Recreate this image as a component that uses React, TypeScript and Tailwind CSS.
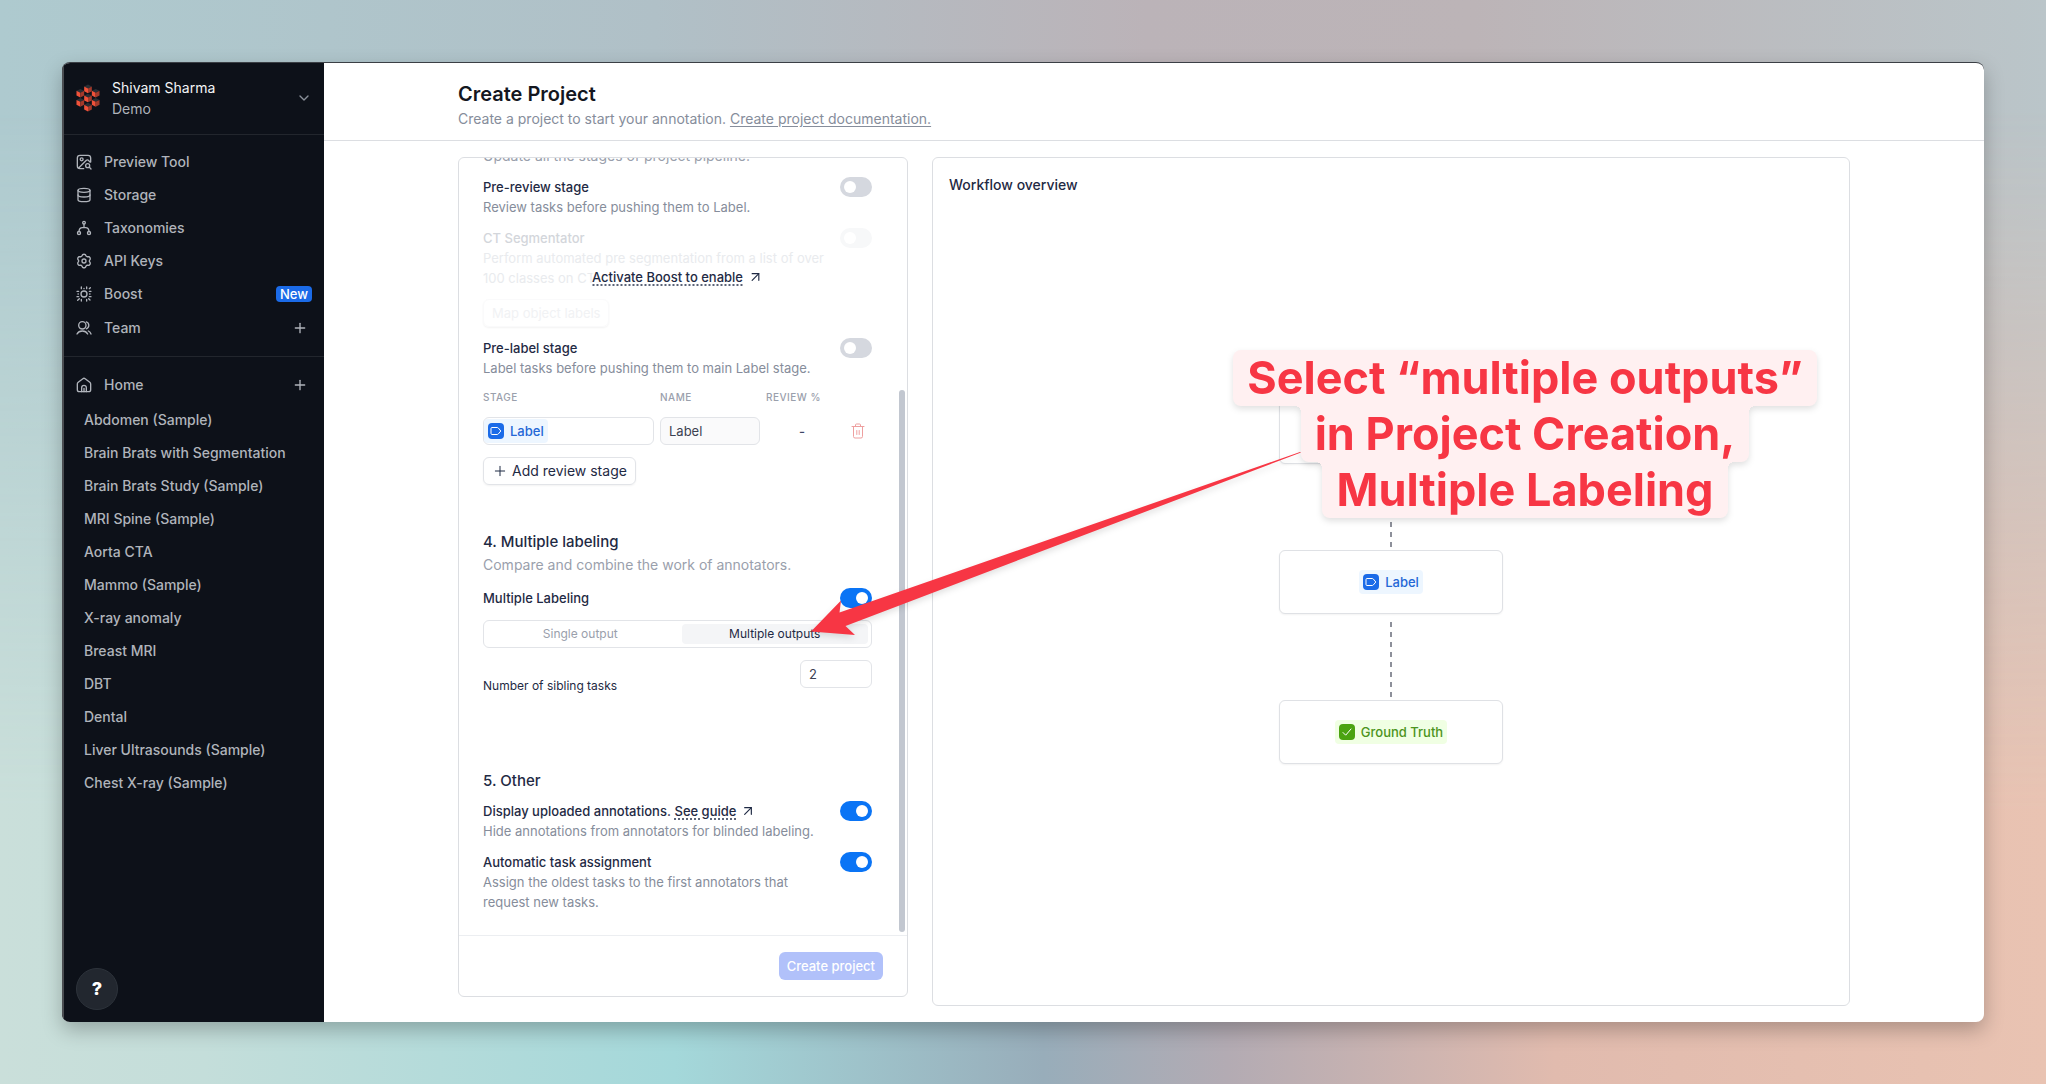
import { useState } from "react";
import { ArrowUpRight, ChevronDown, Database, Plus } from "lucide-react";

const projects = [
  "Abdomen (Sample)",
  "Brain Brats with Segmentation",
  "Brain Brats Study (Sample)",
  "MRI Spine (Sample)",
  "Aorta CTA",
  "Mammo (Sample)",
  "X-ray anomaly",
  "Breast MRI",
  "DBT",
  "Dental",
  "Liver Ultrasounds (Sample)",
  "Chest X-ray (Sample)",
];

function Icon({ children }: { children: React.ReactNode }) {
  return (
    <svg
      viewBox="0 0 24 24"
      className="size-4 shrink-0"
      fill="none"
      stroke="currentColor"
      strokeWidth="2"
      strokeLinecap="round"
      strokeLinejoin="round"
      aria-hidden="true"
    >
      {children}
    </svg>
  );
}

const PreviewIcon = () => (
  <Icon>
    <path d="M11.5 22H6a4 4 0 0 1-4-4V6a4 4 0 0 1 4-4h12a4 4 0 0 1 4 4v6" />
    <circle cx="8.5" cy="8" r="2.2" />
    <path d="M4 21 15.5 9.5c1-1 2-1 3 0L21 12" />
    <circle cx="17.5" cy="17.5" r="3" />
    <path d="m20 20 2.5 2.5" />
  </Icon>
);

const TaxonomyIcon = () => (
  <Icon>
    <circle cx="12" cy="4" r="2" />
    <circle cx="4.5" cy="19.5" r="2.3" />
    <circle cx="19.5" cy="19.5" r="2.3" />
    <path d="M12 6v5.500M4.500 17c.3-3.500 2-5.500 5-5.500h5c3 0 4.700 2 5 5.500" />
  </Icon>
);

const GearIcon = () => (
  <Icon>
    <path d="M10 2.500c1.300-.8 2.700-.8 4 0l1.300 2.300c.4.500 1 .8 1.600.8l2.600-.1c1.300.8 2 2 2 3.500L20.200 11.200c-.3.500-.3 1.100 0 1.600l1.300 2.200c0 1.500-.7 2.700-2 3.500l-2.600-.1c-.6 0-1.200.3-1.600.8L14 21.500c-1.300.8-2.700.8-4 0l-1.300-2.300c-.4-.5-1-.8-1.600-.8l-2.600.1c-1.300-.8-2-2-2-3.500l1.300-2.200c.3-.5.3-1.100 0-1.600L2.500 9c0-1.500.7-2.700 2-3.500l2.600.1c.6 0 1.200-.3 1.600-.8z" />
    <circle cx="12" cy="12" r="3" />
  </Icon>
);

const BoostIcon = () => (
  <Icon>
    <circle cx="12" cy="12" r="4.5" />
    <path d="M8 1.500V4M16 1.500V4M8 20v2.500M16 20v2.500M1.500 8H4M1.500 16H4M20 8h2.500M20 16h2.500M12 3.500v.5M20.500 12h.5M20 4l1.500-1.500M19 19l2 2M5 19l-2.500 2.500M3 12h.5" />
  </Icon>
);

const TeamIcon = () => (
  <Icon>
    <circle cx="9.5" cy="8" r="5.5" />
    <path d="M15.500 2.800a5.500 5.500 0 0 1 0 10.400" />
    <path d="M1.500 21c1.500-3 4.500-4.500 8-4.500s6.500 1.500 8 4.500M18.500 16.500c2 .8 3.300 2.300 4 4.500" />
  </Icon>
);

const HomeIcon = () => (
  <Icon>
    <path d="M2 10.500c0-1 .5-2 1.300-2.600l7-5.300a2.800 2.800 0 0 1 3.400 0l7 5.300c.8.600 1.300 1.600 1.300 2.600V19a3 3 0 0 1-3 3H5a3 3 0 0 1-3-3z" />
    <path d="M8.500 22v-6a3.500 3.500 0 0 1 7 0v6M12 17v5" />
  </Icon>
);

function Cube({ x, y }: { x: number; y: number }) {
  return (
    <g transform={`translate(${x} ${y})`}>
      <path d="M0 0 4-2 8 0 4 2z" fill="#2b2f35" />
      <path d="M0 0 4 2v5L0 5z" fill="#f0523a" />
      <path d="M8 0 4 2v5l4-2z" fill="#a33a2b" />
    </g>
  );
}

function Logo() {
  return (
    <svg viewBox="0 0 25 29" className="h-7 w-6 shrink-0" aria-hidden="true">
      <Cube x={8.5} y={2.5} />
      <Cube x={0.5} y={7} />
      <Cube x={16.5} y={7} />
      <Cube x={8.5} y={12} />
      <Cube x={0.5} y={16.5} />
      <Cube x={16.5} y={16.5} />
      <Cube x={8.5} y={21.5} />
    </svg>
  );
}

function NavItem({
  icon,
  label,
  children,
}: {
  icon: React.ReactNode;
  label: string;
  children?: React.ReactNode;
}) {
  return (
    <li className="flex h-[33px] items-center justify-between pr-3">
      <a href="#" className="flex items-center gap-3">
        {icon}
        {label}
      </a>
      {children}
    </li>
  );
}

function AddButton({ label }: { label: string }) {
  return (
    <button type="button" aria-label={label} className="p-1">
      <Plus className="size-4" strokeWidth={2} />
    </button>
  );
}

function Sidebar() {
  return (
    <aside className="flex w-[262px] shrink-0 flex-col border-l-2 border-[#4b4e52] bg-[#0d1119] text-sm font-medium text-[#b0b4bb]">
      <button
        type="button"
        className="flex h-[72px] items-center border-b border-[#22262d] pr-3 pb-px pl-3 text-left"
      >
        <Logo />
        <span className="ml-3 flex-1 leading-[21px] font-normal">
          <span className="block text-[#f3f4f6]">Shivam Sharma</span>
          <span className="block">Demo</span>
        </span>
        <ChevronDown className="size-4 text-[#8b909a]" />
      </button>
      <nav className="border-b border-[#22262d] pt-2.5 pb-3 pl-3">
        <ul>
          <NavItem icon={<PreviewIcon />} label="Preview Tool" />
          <NavItem icon={<Database className="size-4" />} label="Storage" />
          <NavItem icon={<TaxonomyIcon />} label="Taxonomies" />
          <NavItem icon={<GearIcon />} label="API Keys" />
          <NavItem icon={<BoostIcon />} label="Boost">
            <span className="rounded bg-[#1b6be8] px-1 text-[13px] leading-4 text-white">New</span>
          </NavItem>
        </ul>
        <ul className="mt-px">
          <NavItem icon={<TeamIcon />} label="Team">
            <AddButton label="Add team member" />
          </NavItem>
        </ul>
      </nav>
      <nav className="pt-[11px] pl-3">
        <ul>
          <NavItem icon={<HomeIcon />} label="Home">
            <AddButton label="Add project" />
          </NavItem>
        </ul>
        <ul className="mt-0.5 pl-2">
          {projects.map((name) => (
            <li key={name} className="flex h-[33px] items-center">
              <a href="#">{name}</a>
            </li>
          ))}
        </ul>
      </nav>
      <button
        type="button"
        aria-label="Help"
        className="mt-auto mb-3 ml-3 size-[42px] rounded-full border border-[#2d333b] bg-[#22272f] text-lg font-extrabold text-white"
      >
        ?
      </button>
    </aside>
  );
}

function Toggle({ id, on = false, disabled = false }: { id: string; on?: boolean; disabled?: boolean }) {
  return (
    <input
      id={id}
      type="checkbox"
      role="switch"
      defaultChecked={on}
      disabled={disabled}
      className="relative h-5 w-8 shrink-0 appearance-none rounded-full bg-[#d5d8df] before:absolute before:top-1 before:left-1 before:size-3 before:rounded-full before:bg-white checked:bg-[#0a74f5] checked:before:left-4 disabled:bg-[#f7f8f9]"
    />
  );
}

function ToggleRow({
  id,
  title,
  extra,
  description,
  on,
}: {
  id: string;
  title: string;
  extra?: React.ReactNode;
  description: string;
  on?: boolean;
}) {
  return (
    <div className="flex items-start justify-between">
      <div className="max-w-[350px]">
        <label htmlFor={id} className="font-medium text-[#1f2a44]">
          {title}
        </label>
        {extra}
        <p className="text-[#868d9b]">{description}</p>
      </div>
      <Toggle id={id} on={on} />
    </div>
  );
}

function OutLink({ children }: { children: React.ReactNode }) {
  return (
    <a href="#" className="inline-flex items-center gap-1 font-medium text-[#1f2a44]">
      <span className="underline decoration-[#5b6478] decoration-dotted decoration-2 underline-offset-2">
        {children}
      </span>
      <ArrowUpRight className="size-4" strokeWidth={1.75} />
    </a>
  );
}

function LabelTag() {
  return (
    <span className="inline-flex items-center gap-1.5 rounded bg-[#edf6ff] p-1 leading-4 font-medium text-[#2467d6]">
      <span className="flex size-4 items-center justify-center rounded bg-[#1b6be8]">
        <svg viewBox="0 0 12 12" className="size-3" fill="none" stroke="#fff" strokeLinejoin="round" aria-hidden="true">
          <path d="M2 2.500h5.200c.5 0 .9.200 1.200.6L10.800 6 8.400 8.900c-.3.400-.7.600-1.200.6H2c-.6 0-1-.4-1-1v-5c0-.6.4-1 1-1z" />
        </svg>
      </span>
      Label
    </span>
  );
}

function TruthTag() {
  return (
    <span className="inline-flex items-center gap-1.5 rounded bg-[#f0ffe3] p-1 leading-4 font-medium text-[#4c9420]">
      <span className="flex size-4 items-center justify-center rounded bg-[#4ba310]">
        <svg viewBox="0 0 12 12" className="size-3" fill="none" stroke="#fff" strokeLinecap="round" strokeLinejoin="round" aria-hidden="true">
          <path d="m2 6.500 2.700 2.700L10 3" />
        </svg>
      </span>
      Ground Truth
    </span>
  );
}

function TrashIcon() {
  return (
    <svg viewBox="0 0 14 16" className="h-4 w-3.5" fill="none" stroke="#ee9f9f" strokeLinecap="round" strokeLinejoin="round" aria-hidden="true">
      <path d="M1 3.500h12M4.500 3.500v-1.500a1 1 0 0 1 1-1h3a1 1 0 0 1 1 1v1.500M2.500 3.500v10a1.500 1.500 0 0 0 1.500 1.500h6a1.500 1.500 0 0 0 1.500-1.500v-10M5.800 7.500v4M8.200 7.500v4" />
    </svg>
  );
}

function SettingsPanel() {
  const [multiple, setMultiple] = useState(true);
  return (
    <form className="mb-[9px] flex w-[450px] shrink-0 flex-col overflow-hidden rounded-md border border-[#dcdee2] bg-white text-[13px] leading-5">
      <div className="relative min-h-0 flex-1 overflow-hidden pr-[35px] pl-6">
        <p className="-mt-3 text-sm leading-5 text-[#9aa0ac]">Update all the stages of project pipeline.</p>
        <div className="mt-[11px] flex flex-col gap-[11px]">
          <ToggleRow id="pre-review" title="Pre-review stage" description="Review tasks before pushing them to Label." />
          <div className="relative">
            <div className="flex items-start justify-between">
              <div className="max-w-[345px]">
                <label htmlFor="ct" className="font-medium text-[#d3d6db]">
                  CT Segmentator
                </label>
                <p className="text-[#e9ebee]">
                  Perform automated pre segmentation from a list of over 100 classes on CTs
                </p>
              </div>
              <Toggle id="ct" disabled />
            </div>
            <button
              type="button"
              disabled
              className="mt-[11px] h-7 rounded-md border border-[#fafafb] px-2 text-[#f1f2f4] shadow-xs"
            >
              Map object labels
            </button>
            <div className="absolute top-[39px] left-1/2 -translate-x-1/2 bg-white/80">
              <OutLink>Activate Boost to enable</OutLink>
            </div>
          </div>
          <ToggleRow id="pre-label" title="Pre-label stage" description="Label tasks before pushing them to main Label stage." />
        </div>

        <table className="mt-[9px] w-full table-fixed text-left">
          <thead className="text-[10px] tracking-wider text-[#9aa0ac]">
            <tr className="h-5">
              <th className="w-[177px] font-medium">STAGE</th>
              <th className="w-[106px] font-medium">NAME</th>
              <th className="font-medium">REVIEW %</th>
              <th className="w-7">
                <span className="sr-only">Remove</span>
              </th>
            </tr>
          </thead>
          <tbody>
            <tr>
              <td className="pt-2.5 pr-1.5">
                <div className="flex h-7 items-center rounded-md border border-[#e2e4e8]">
                  <LabelTag />
                </div>
              </td>
              <td className="pt-2.5 pr-1.5">
                <input
                  aria-label="Stage name"
                  defaultValue="Label"
                  className="h-7 w-full rounded-md border border-[#e2e4e8] bg-[#fafafb] px-2 text-[#3c4252]"
                />
              </td>
              <td className="pt-2.5 pr-1.5 text-center font-medium text-[#3c4766]">-</td>
              <td className="pt-2.5">
                <button type="button" aria-label="Remove stage" className="flex h-7 items-center pl-[7px]">
                  <TrashIcon />
                </button>
              </td>
            </tr>
          </tbody>
        </table>
        <button
          type="button"
          className="mt-3 flex h-7 items-center gap-1 rounded-md border border-[#e2e4e8] px-2 text-sm text-[#1f2a44] shadow-xs"
        >
          <Plus className="size-4" strokeWidth={1.5} />
          Add review stage
        </button>

        <h2 className="mt-[45px] text-[15px] leading-6 font-medium text-[#1f2a44]">4. Multiple labeling</h2>
        <p className="mt-px text-sm leading-5 text-[#9aa0ac]">Compare and combine the work of annotators.</p>
        <div className="mt-[13px] flex items-center justify-between">
          <label htmlFor="multi" className="font-medium text-[#1f2a44]">
            Multiple Labeling
          </label>
          <Toggle id="multi" on />
        </div>
        <div className="mt-3 grid h-7 grid-cols-2 gap-2 rounded-md border border-[#e2e4e8] p-[3px] text-xs text-[#9aa0ac]">
          <button
            type="button"
            aria-pressed={!multiple}
            onClick={() => setMultiple(false)}
            className="rounded aria-pressed:bg-[#f4f5f7] aria-pressed:text-[#1f2a44]"
          >
            Single output
          </button>
          <button
            type="button"
            aria-pressed={multiple}
            onClick={() => setMultiple(true)}
            className="rounded aria-pressed:bg-[#f4f5f7] aria-pressed:text-[#1f2a44]"
          >
            Multiple outputs
          </button>
        </div>
        <div className="mt-3 flex items-start justify-between">
          <label htmlFor="siblings" className="pt-4 text-xs leading-5 text-[#1f2a44]">
            Number of sibling tasks
          </label>
          <input
            id="siblings"
            defaultValue="2"
            className="h-7 w-[72px] rounded-md border border-[#e2e4e8] px-2 text-[#3c4252]"
          />
        </div>

        <h2 className="mt-[73px] text-[15px] leading-6 font-medium text-[#1f2a44]">5. Other</h2>
        <div className="mt-2 mb-5 flex flex-col gap-[11px]">
          <ToggleRow
            id="display"
            title="Display uploaded annotations."
            extra={
              <>
                {" "}
                <OutLink>See guide</OutLink>
              </>
            }
            description="Hide annotations from annotators for blinded labeling."
            on
          />
          <ToggleRow
            id="auto"
            title="Automatic task assignment"
            description="Assign the oldest tasks to the first annotators that request new tasks."
            on
          />
        </div>
        <div className="absolute right-0.5 bottom-[3px] h-[542px] w-1.5 rounded-full bg-[#c2c7d0]" />
      </div>
      <div className="flex justify-end border-t border-[#eceef1] pt-4 pr-6 pb-4">
        <button
          type="submit"
          disabled
          className="h-7 rounded-md bg-[#b1c1fa] px-2 font-medium text-white"
        >
          Create project
        </button>
      </div>
    </form>
  );
}

function Node({ children }: { children?: React.ReactNode }) {
  return (
    <div className="flex h-16 w-[224px] items-center justify-center rounded-md border border-[#dfe1e5] bg-white shadow-xs">
      {children}
    </div>
  );
}

function Connector() {
  return (
    <div className="mt-2 mb-[3px] h-[75px] w-0.5 bg-[repeating-linear-gradient(to_bottom,#8d909a_0_5px,transparent_5px_10px)]" />
  );
}

function WorkflowPanel() {
  return (
    <section className="relative flex flex-1 flex-col items-center justify-center rounded-md border border-[#dcdee2] text-[13px]">
      <h2 className="absolute top-[15px] left-4 text-sm leading-6 font-medium text-[#1f2a44]">Workflow overview</h2>
      <Node />
      <Connector />
      <Node>
        <LabelTag />
      </Node>
      <Connector />
      <Node>
        <TruthTag />
      </Node>
    </section>
  );
}

function Callout() {
  return (
    <>
      <svg
        viewBox="0 0 500 200"
        className="pointer-events-none absolute top-[305px] left-[346px] h-[200px] w-[500px] drop-shadow-md"
        aria-hidden="true"
      >
        <path d="M496 6 35.500 166.500 37 154.500 7 185.500l44 3.500-9.500-9L497 6.500z" fill="#f73644" />
      </svg>
      <div className="absolute top-[209px] left-[774px] flex w-[586px] flex-col items-center text-[45px] leading-[56px] font-bold text-[#f73644] drop-shadow-md">
        <p className="rounded-lg bg-[#fff0f1] px-3.5 whitespace-nowrap">Select “multiple outputs”</p>
        <p className="relative rounded-b-lg bg-[#fff0f1] px-3.5 whitespace-nowrap before:absolute before:top-0 before:right-full before:size-1.5 before:bg-[radial-gradient(circle_at_bottom_left,transparent_6px,#fff0f1_6px)] after:absolute after:top-0 after:left-full after:size-1.5 after:bg-[radial-gradient(circle_at_bottom_right,transparent_6px,#fff0f1_6px)]">
          in Project Creation,
        </p>
        <p className="relative rounded-b-lg bg-[#fff0f1] px-3.5 whitespace-nowrap before:absolute before:top-0 before:right-full before:size-1.5 before:bg-[radial-gradient(circle_at_bottom_left,transparent_6px,#fff0f1_6px)] after:absolute after:top-0 after:left-full after:size-1.5 after:bg-[radial-gradient(circle_at_bottom_right,transparent_6px,#fff0f1_6px)]">
          Multiple Labeling
        </p>
      </div>
    </>
  );
}

export default function App() {
  return (
    <div className="relative flex min-h-screen bg-[linear-gradient(to_right,#aecacf_0%,#b0c0c7_32%,#bbb3b8_56%,#bcb4b7_72%,#bac5c9_100%)] p-[62px] font-['Inter',sans-serif]">
      <div className="absolute inset-0 bg-[linear-gradient(to_right,#cadfda_0%,#c4deda_10%,#a4d8da_33%,#98adba_51%,#b3abb3_60%,#e1bbae_76%,#e9c3b2_100%)] mask-[linear-gradient(to_bottom,transparent_10%,black_75%)]" />
      <div className="relative flex flex-1 overflow-hidden rounded-lg border-t border-[#3b3f45] bg-white shadow-[0_8px_20px_rgb(0_0_0/0.25)]">
        <Sidebar />
        <main className="flex min-w-0 flex-1 flex-col">
          <header className="border-b border-[#dcdee2]">
            <div className="mx-auto h-[77px] max-w-[1392px] pt-[19px]">
              <h1 className="text-xl leading-6 font-semibold text-[#14171f]">Create Project</h1>
              <p className="mt-[3px] text-sm leading-5 text-[#868d9b]">
                Create a project to start your annotation.{" "}
                <a href="#" className="underline underline-offset-2">
                  Create project documentation.
                </a>
              </p>
            </div>
          </header>
          <div className="relative mx-auto flex w-full max-w-[1392px] flex-1 gap-6 pt-4 pb-4">
            <SettingsPanel />
            <WorkflowPanel />
            <Callout />
          </div>
        </main>
      </div>
    </div>
  );
}
